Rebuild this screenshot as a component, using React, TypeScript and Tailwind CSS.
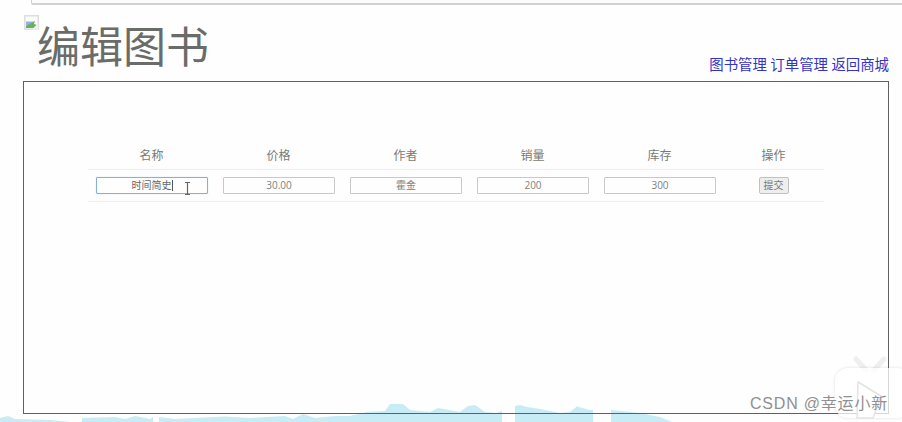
const cjk = "font-['Liberation_Sans','Noto_Sans_CJK_SC',sans-serif]";

const columns = [
  { name: '名称', value: '时间简史' },
  { name: '价格', value: '30.00' },
  { name: '作者', value: '霍金' },
  { name: '销量', value: '200' },
  { name: '库存', value: '300' },
];

// Broken image placeholder, as the browser draws it
function BrokenImage() {
  return (
    <svg className="w-[15px] h-[15px] shrink-0" viewBox="0 0 15 15">
      <rect x="0" y="0" width="15" height="15" fill="#dcdfdc" />
      <rect x="1.5" y="1.5" width="12" height="12" fill="#fafbfb" />
      <path d="M2 6.5h8l-4 3-4 1.500z" fill="#8fb4ea" />
      <path d="M2 13v-2l5-3 4-2-1 3 3 1-1 3z" fill="#6fae5c" />
      <path d="M9 13.500l5.500-6v7.500H9z" fill="#eef0ee" />
    </svg>
  );
}

// Wavy strip of the page background behind the box bottom edge
function BottomWave() {
  return (
    <svg className="absolute left-0 bottom-0 w-[902px] h-[30px]" viewBox="0 0 902 30">
      <path
        d="M0 30V26L8 24L15 27L50 28L70 30ZM82 30V26L115 25L125 27L135 24L150 27L153 25V30ZM159 30V25L175 27L225 24.500L250 26L285 24L293 27L303 22L315 26L335 24L350 24L367 20L385 19L390 12L403 12L410 18L430 20L438 16L460 20L468 14L475 13L485 20L497 21L502 19V30ZM515 30V14L520 13L527 15L540 17L560 21L570 20L577 14.500L590 18L593 18V30ZM611 30V18L630 20L640 21L660 25L670 29L672 30Z"
        fill="#c8ecf6"
      />
    </svg>
  );
}

export default function App() {
  return (
    <div className={`relative w-[902px] h-[422px] overflow-hidden bg-[#fdfefd] ${cjk}`}>
      <BottomWave />

      {/* Browser address bar edge */}
      <div className="h-[5px] ml-[31px] bg-[#fcfcfc] border-b-[2px] border-l border-[#cfd2cf] rounded-bl-[2px]" />

      {/* Header */}
      <div className="h-[76px] flex items-start pl-[24px] pr-[13px]">
        <div className="flex items-start mt-[10px]">
          <BrokenImage />
          <h1 className="ml-[-2px] mt-[6px] text-[43px] leading-[54px] font-normal text-[#6a6c6a]">编辑图书</h1>
        </div>
        <div className="ml-auto mt-[49px] flex gap-[3.5px] text-[14.4px] leading-[22px] text-[#3333c8]">
          <a>图书管理</a>
          <a>订单管理</a>
          <a>返回商城</a>
        </div>
      </div>

      {/* Main box */}
      <div className="relative ml-[23px] mr-[13px] h-[333px] border border-[#5f615f] pt-[60px] pl-[64px]">
        <div className="w-[736px] text-[12px] text-[#787a78]">
          <div className="flex h-[28px] border-b border-[#eceeec] items-center">
            {columns.map((c) => (
              <div key={c.name} className="w-[127px] text-center">{c.name}</div>
            ))}
            <div className="w-[101px] text-center">操作</div>
          </div>
          <div className="flex h-[32px] border-b border-[#eceeec] items-center pb-[1px]">
            {columns.map((c, i) => (
              <div key={c.name} className="w-[127px] flex justify-center pl-[1px]">
                <div
                  className={`w-[112px] h-[17px] border text-center text-[10px] leading-[15px] rounded-[1px] font-['Open_Sans','Noto_Sans_CJK_SC',sans-serif] ${
                    i === 0
                      ? 'border-[#86b0da] shadow-[0_0_1px_#a8c8e8] text-[#666866]'
                      : 'border-[#c8cac8] text-[#808280]'
                  }`}
                >
                  {c.value}
                  {i === 0 && <span className="inline-block w-px h-[11px] align-[-2px] bg-[#555755]" />}
                </div>
              </div>
            ))}
            <div className="w-[101px] flex justify-center">
              <button className="w-[30px] h-[17px] border border-[#c0c2c0] bg-[#eeeeee] rounded-[2px] text-[10px] leading-[15px] text-[#787a78]">
                提交
              </button>
            </div>
          </div>
        </div>
      </div>

      {/* Text cursor over the first input */}
      <svg className="absolute left-[184px] top-[182px] w-[7px] h-[13px]" viewBox="0 0 7 13">
        <path d="M1 .5h5M3.500 .5v12M1 12.500h5" stroke="#666" fill="none" strokeWidth="1.200" />
      </svg>

      {/* Video logo */}
      <svg className="absolute left-[850px] top-[355px] w-[40px] h-[18px]" viewBox="0 0 40 18">
        <path d="M6 4L16 15M34 4L24 15" stroke="#eeefee" strokeWidth="5" strokeLinecap="round" />
      </svg>
      <div className="absolute left-[835px] top-[368px] w-[75px] h-[50px] rounded-[13px] bg-white/75 shadow-[0_0_3px_rgba(0,0,0,0.14)]" />
      <svg className="absolute left-[853px] top-[378px] w-[34px] h-[42px]" viewBox="0 0 34 42">
        <path d="M5 4L28 18L20 40H4Z" fill="#ffffff" stroke="#e2e4e2" strokeWidth="1.500" strokeLinejoin="round" />
      </svg>

      {/* Watermark */}
      <div className="absolute right-[14px] top-[394px] whitespace-nowrap text-[16px] leading-[20px] tracking-[0.8px] text-[#909090]">
        CSDN @幸运小新
      </div>
    </div>
  );
}
